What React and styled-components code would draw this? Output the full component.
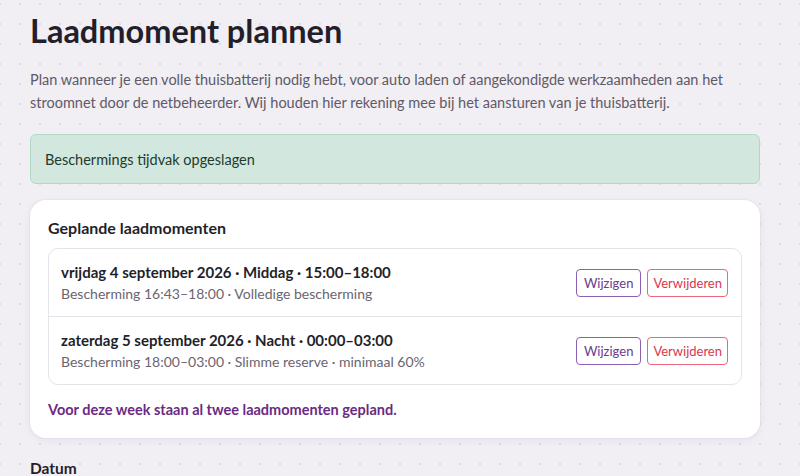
import React from "react";
import styled, { createGlobalStyle } from "styled-components";

const GlobalStyle = createGlobalStyle`
  html, body { margin: 0; padding: 0; }
  body {
    font-family: "Lato", "Noto Sans", sans-serif;
    color: #231f2a;
    background-color: #f1eef4;
    background-image: radial-gradient(circle, #dfdbe5 0.9px, transparent 1.1px);
    background-size: 20px 20px;
    background-position: -10px -6px;
    overflow: hidden;
  }
`;

const Page = styled.main`
  width: 730px;
  padding: 8px 0 0 30px;
  display: flex;
  flex-direction: column;
`;

const Title = styled.h1`
  margin: 0;
  font-size: 32.5px;
  line-height: 46px;
  font-weight: 700;
  color: #231f2a;
`;

const Intro = styled.p`
  margin: 14px 0 0;
  font-size: 14.5px;
  line-height: 23px;
  color: #5f5a68;
`;

const Alert = styled.div`
  margin-top: 20px;
  height: 50px;
  box-sizing: border-box;
  display: flex;
  align-items: center;
  padding: 0 14px;
  background: #d2e7de;
  border: 1px solid #b3d9c6;
  border-radius: 6px;
  color: #1d3b2e;
  font-size: 14.5px;
`;

const Card = styled.section`
  margin-top: 16px;
  background: #fff;
  border-radius: 16px;
  box-shadow: 0 2px 8px rgba(60, 40, 90, 0.06), 0 0 0 1px rgba(60, 40, 90, 0.03);
  padding: 16px 18px 17px;
  display: flex;
  flex-direction: column;
`;

const CardTitle = styled.h2`
  margin: 0;
  font-size: 16px;
  line-height: 24px;
  font-weight: 700;
  color: #231f2a;
`;

const List = styled.ul`
  list-style: none;
  margin: 8px 0 0;
  padding: 0;
  border: 1px solid #e6e2ea;
  border-radius: 10px;
`;

const Row = styled.li`
  display: flex;
  align-items: center;
  justify-content: space-between;
  padding: 12px 13px 11px 12px;
  & + & { border-top: 1px solid #e6e2ea; }
`;

const RowText = styled.div`
  display: flex;
  flex-direction: column;
`;

const RowTitle = styled.span`
  font-size: 15px;
  line-height: 22px;
  font-weight: 700;
  color: #231f2a;
`;

const RowSub = styled.span`
  font-size: 14px;
  line-height: 22px;
  color: #6a6570;
`;

const Actions = styled.div`
  display: flex;
  gap: 6px;
`;

const ActionButton = styled.button`
  font-family: inherit;
  font-size: 13px;
  height: 28px;
  padding: 0 ${(p) => (p.$danger ? "5px" : "7px")};
  background: #fff;
  border-radius: 4px;
  cursor: pointer;
  border: 1px solid ${(p) => (p.$danger ? "#e8697a" : "#8d5fb3")};
  color: ${(p) => (p.$danger ? "#d8384f" : "#693c8c")};
`;

const Note = styled.p`
  margin: 14px 0 0;
  font-size: 14.5px;
  line-height: 22px;
  font-weight: 700;
  color: #6b2a84;
`;

const FieldLabel = styled.h3`
  margin: 19px 0 0;
  font-size: 15.5px;
  line-height: 22px;
  font-weight: 700;
  color: #231f2a;
`;

const moments = [
  {
    title: "vrijdag 4 september 2026 · Middag · 15:00–18:00",
    sub: "Bescherming 16:43–18:00 · Volledige bescherming",
  },
  {
    title: "zaterdag 5 september 2026 · Nacht · 00:00–03:00",
    sub: "Bescherming 18:00–03:00 · Slimme reserve · minimaal 60%",
  },
];

export default function App() {
  return (
    <>
      <GlobalStyle />
      <Page>
        <Title>Laadmoment plannen</Title>
        <Intro>
          Plan wanneer je een volle thuisbatterij nodig hebt, voor auto laden of aangekondigde werkzaamheden aan het
          stroomnet door de netbeheerder. Wij houden hier rekening mee bij het aansturen van je thuisbatterij.
        </Intro>
        <Alert>Beschermings tijdvak opgeslagen</Alert>
        <Card>
          <CardTitle>Geplande laadmomenten</CardTitle>
          <List>
            {moments.map((m) => (
              <Row key={m.title}>
                <RowText>
                  <RowTitle>{m.title}</RowTitle>
                  <RowSub>{m.sub}</RowSub>
                </RowText>
                <Actions>
                  <ActionButton>Wijzigen</ActionButton>
                  <ActionButton $danger>Verwijderen</ActionButton>
                </Actions>
              </Row>
            ))}
          </List>
          <Note>Voor deze week staan al twee laadmomenten gepland.</Note>
        </Card>
        <FieldLabel>Datum</FieldLabel>
      </Page>
    </>
  );
}
